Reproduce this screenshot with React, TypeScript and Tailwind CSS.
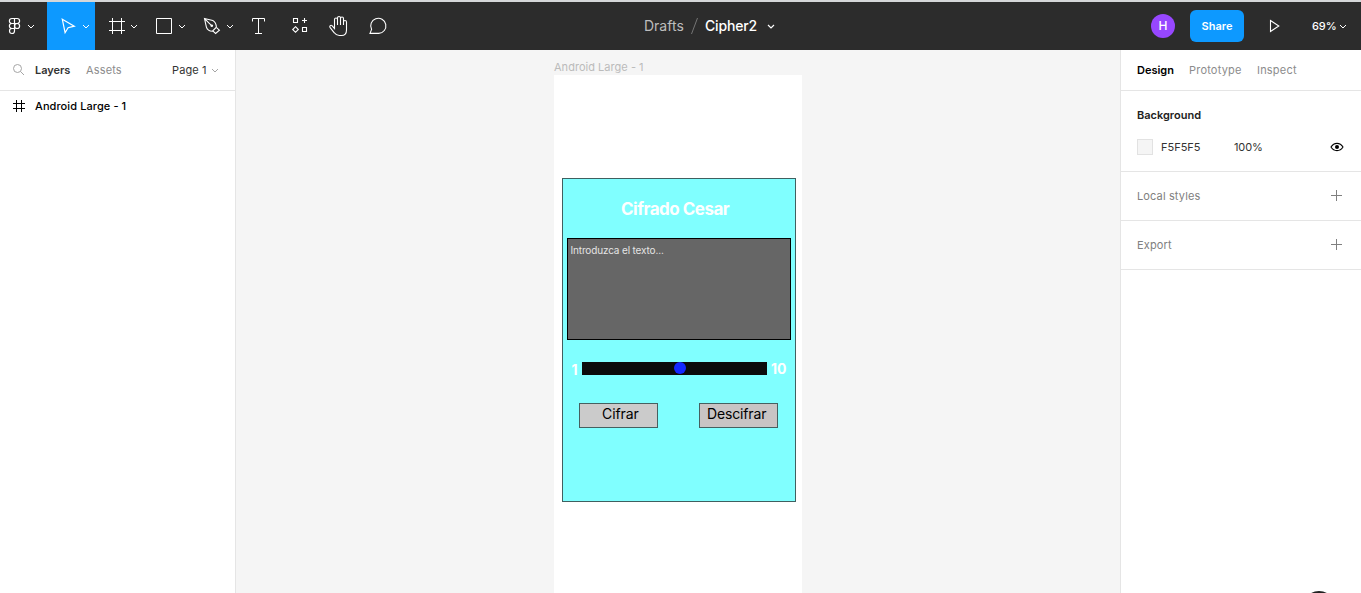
import type { ReactNode } from "react";

function Icon({ box, className = "", children }: { box: [number, number, number, number]; className?: string; children: ReactNode }) {
  return (
    <svg
      width={box[2]}
      height={box[3]}
      viewBox={box.join(" ")}
      className={`shrink-0 ${className}`}
      fill="none"
      stroke="currentColor"
      strokeWidth="1"
    >
      {children}
    </svg>
  );
}

function Toolbar() {
  return (
    <header className="flex h-12 shrink-0 items-center bg-[#2c2c2c] text-white">
      <Icon box={[0, 2, 47, 48]}>
        <path d="M14.5 18.5h-2.6a2.5 2.5 0 0 0 0 5h2.6zM14.5 18.5h2.6a2.5 2.5 0 0 1 0 5h-2.6zM14.5 23.5h-2.6a2.5 2.5 0 0 0 0 5h2.6zM14.5 28.5h-2.6a2.5 2.5 0 1 0 2.6 2.5z" strokeWidth="1.2" />
        <circle cx="17.1" cy="26" r="2.5" strokeWidth="1.2" />
        <path d="M28 25l3 3 3-3" />
      </Icon>
      <div className="h-12 w-12 bg-[#0d99ff]">
        <Icon box={[47, 2, 48, 48]}>
          <path d="M62.3 19.3l12 6.9-6.2 1.5-3 5z" strokeWidth="1.2" />
          <path d="M83 25l3 3 3-3" />
        </Icon>
      </div>
      <Icon box={[95, 2, 48, 48]}>
        <path d="M112.5 18v16M121.5 18v16M109 21.5h16M109 30.5h16" />
        <path d="M131 25l3 3 3-3" />
      </Icon>
      <Icon box={[143, 2, 48, 48]}>
        <path d="M156.5 18.5h15v15h-15z" />
        <path d="M179 25l3 3 3-3" />
      </Icon>
      <Icon box={[191, 2, 48, 48]}>
        <path d="M204.5 18.5l8.3 2c2.3 1.2 3.4 4 3.6 6.7l-4 4c-2.9-.1-5.2-1.5-6-4.1zM204.8 18.8l6.5 6.5" strokeWidth="1.1" />
        <circle cx="211.8" cy="25.8" r="1.3" fill="currentColor" stroke="none" />
        <path d="M216.6 27.6l2.8 2.6-3.8 3.3-2.8-2.6" strokeWidth="1.1" />
        <path d="M227 25l3 3 3-3" />
      </Icon>
      <Icon box={[239, 2, 40, 48]}>
        <path d="M252.5 21.5v-3h12v3M258.5 18.5v15M255 33.5h7" />
      </Icon>
      <Icon box={[279, 2, 40, 48]}>
        <path d="M293.5 18.5h4v4h-4zM302.5 27.5h4v4h-4zM304.5 18v5M302 20.5h5M295.5 26.7l2.8 2.8-2.8 2.8-2.8-2.8z" strokeWidth="1.1" />
      </Icon>
      <Icon box={[319, 2, 40, 48]}>
        <path d="M334.5 28.5v-9a1.5 1.5 0 0 1 3 0V25v-7a1.5 1.5 0 0 1 3 0v7-6.5a1.5 1.5 0 0 1 3 0v6.5-3a1.5 1.5 0 0 1 3 0v8c0 3.3-2 5.5-5 5.5h-2.2c-2.3 0-3.7-.9-5-2.7l-4.3-5.4c-.8-1.3.7-2.7 2-1.8z" strokeWidth="1.1" />
      </Icon>
      <Icon box={[359, 2, 40, 48]}>
        <path d="M370 33.4l1.6-4a7.6 7.6 0 1 1 7.1 4z" strokeWidth="1.1" />
      </Icon>

      <div className="flex h-12 grow items-center pl-[245px] text-[14px]">
        <span className="w-[41px] whitespace-nowrap pb-px text-[#bdbdbd]">Drafts</span>
        <Icon box={[0, 0, 20, 48]} className="text-[#757575]">
          <path d="M6.5 32l6-16" />
        </Icon>
        <span className="w-[53px] whitespace-nowrap pb-px font-medium tracking-[-0.15px]">Cipher2</span>
        <Icon box={[758, 2, 24, 48]}>
          <path d="M768 25l3 3 3-3" strokeWidth="1.2" />
        </Icon>
      </div>

      <div className="flex h-6 w-6 items-center justify-center rounded-full bg-[#9747ff] text-[12px] font-medium">H</div>
      <button className="ml-[15px] h-8 w-[54px] rounded-md bg-[#0d99ff] text-[11px] font-semibold">Share</button>
      <Icon box={[1244, 2, 67, 48]}>
        <path d="M1270.5 20.5v11l8.3-5.5z" strokeWidth="1.1" />
      </Icon>
      <span className="w-[25px] whitespace-nowrap pl-px text-[11px] font-medium tracking-[-0.1px]">69%</span>
      <Icon box={[1336, 2, 25, 48]}>
        <path d="M1340 25l3 3 3-3" />
      </Icon>
    </header>
  );
}

function LayersPanel() {
  return (
    <aside className="flex w-[236px] shrink-0 flex-col border-r border-[#e5e5e5] bg-white text-[11px] text-[#333]">
      <div className="flex h-[41px] items-center border-b border-[#e5e5e5] pl-2">
        <Icon box={[8, 50, 27, 40]} className="text-[#a5a5a5]">
          <circle cx="17.5" cy="68.5" r="4" />
          <path d="M20.5 71.5l3.5 3.5" />
        </Icon>
        <span className="w-[51px] font-semibold tracking-[-0.05px]">Layers</span>
        <span className="w-[86px] tracking-[0.15px] text-[#8c8c8c]">Assets</span>
        <span className="w-[36px] whitespace-nowrap tracking-[0.1px]">Page 1</span>
        <Icon box={[208, 50, 14, 40]} className="text-[#a5a5a5]">
          <path d="M212 69l3 3 3-3" />
        </Icon>
      </div>
      <div className="flex h-[31px] items-center pl-2 text-black">
        <Icon box={[8, 91, 27, 31]}>
          <path d="M16.5 100v12M21.5 100v12M13 103.5h12M13 108.5h12" />
        </Icon>
        <span className="font-medium tracking-[0.09px]">Android Large - 1</span>
      </div>
    </aside>
  );
}

function CanvasButton({ label, className }: { label: string; className: string }) {
  return (
    <div className={`absolute top-[327.5px] h-[25px] w-[79px] border border-[#456060] text-[14px] leading-[20px] text-black ${className}`}>
      {label}
    </div>
  );
}

function Canvas() {
  return (
    <main className="relative grow overflow-hidden bg-[#f5f5f5]">
      <span className="absolute left-[318px] top-[9px] whitespace-nowrap text-[11px] leading-4 tracking-[0.03px] text-[#bbb]">Android Large - 1</span>
      <section className="absolute left-[318px] top-[25px] h-[560px] w-[248px] bg-white">
        <div className="absolute left-2 top-[103px] h-[324px] w-[234px] border border-[#406060] bg-[#80ffff]" />
        <h1 className="absolute left-[67px] top-[122px] whitespace-nowrap text-[17px] font-bold leading-6 tracking-[-0.5px] text-white">Cifrado Cesar</h1>
        <div className="absolute left-[13px] top-[163px] h-[102px] w-[224px] border border-black bg-[#666] pl-[2.5px] pt-[3px] text-[10px] leading-4 tracking-[-0.15px] text-[#e4e4e4]">
          Introduzca el texto...
        </div>
        <span className="absolute left-[17.5px] top-[285px] text-[14px] font-bold leading-5 text-white">1</span>
        <div className="absolute left-[28px] top-[287px] h-[13px] w-[185px] bg-[#0b0b0b]" />
        <div className="absolute left-[120px] top-[287px] h-3 w-3 rounded-full bg-[#1428ff]" />
        <span className="absolute left-[217px] top-[284px] text-[14px] font-bold leading-5 text-white">10</span>
        <CanvasButton label="Cifrar" className="left-[25px] bg-[#cbcbcb] pl-[22px] tracking-[-0.1px]" />
        <CanvasButton label="Descifrar" className="left-[145px] bg-[#c8c4c4] pl-[7px] tracking-[-0.15px]" />
      </section>
    </main>
  );
}

function PlusRow({ label }: { label: string }) {
  return (
    <div className="flex h-[49px] items-center justify-between border-b border-[#e5e5e5] pl-4 pr-[18px] text-[#808080]">
      <span className="tracking-[0.13px]">{label}</span>
      <Icon box={[0, 0, 13, 12]}>
        <path d="M6.5 0v11M1 5.5h11" />
      </Icon>
    </div>
  );
}

function DesignPanel() {
  return (
    <aside className="relative flex w-[241px] shrink-0 flex-col overflow-hidden border-l border-[#e5e5e5] bg-white text-[11px] text-[#333]">
      <nav className="flex h-[41px] shrink-0 items-center border-b border-[#e5e5e5] pl-4 text-[#8c8c8c]">
        <span className="w-[52px] font-semibold text-black">Design</span>
        <span className="w-[68px] tracking-[0.2px]">Prototype</span>
        <span className="tracking-[0.2px]">Inspect</span>
      </nav>
      <section className="h-[81px] shrink-0 border-b border-[#e5e5e5] pl-4 pt-4">
        <h2 className="font-semibold leading-4 text-[#222]">Background</h2>
        <div className="mt-4 flex h-4 items-center">
          <span className="h-4 w-4 border border-[#e2e2e2] bg-[#f5f5f5]" />
          <span className="ml-2 w-[73px]">F5F5F5</span>
          <span className="w-[95px] tracking-[-0.1px]">100%</span>
          <Icon box={[1329, 139, 16, 16]} className="text-black">
            <path d="M1331 147c3-4.8 9-4.8 12 0-3 4.8-9 4.8-12 0z" strokeWidth="1.1" />
            <circle cx="1337" cy="147" r="2" fill="currentColor" stroke="none" />
          </Icon>
        </div>
      </section>
      <PlusRow label="Local styles" />
      <PlusRow label="Export" />
      <div className="absolute left-[182px] top-[541px] h-8 w-8 rounded-full bg-[#222]" />
    </aside>
  );
}

export default function App() {
  return (
    <div className="flex h-[593px] w-[1361px] flex-col overflow-hidden border-t-2 border-[#d5d7d9] font-['Inter',sans-serif]">
      <Toolbar />
      <div className="flex min-h-0 grow">
        <LayersPanel />
        <Canvas />
        <DesignPanel />
      </div>
    </div>
  );
}
